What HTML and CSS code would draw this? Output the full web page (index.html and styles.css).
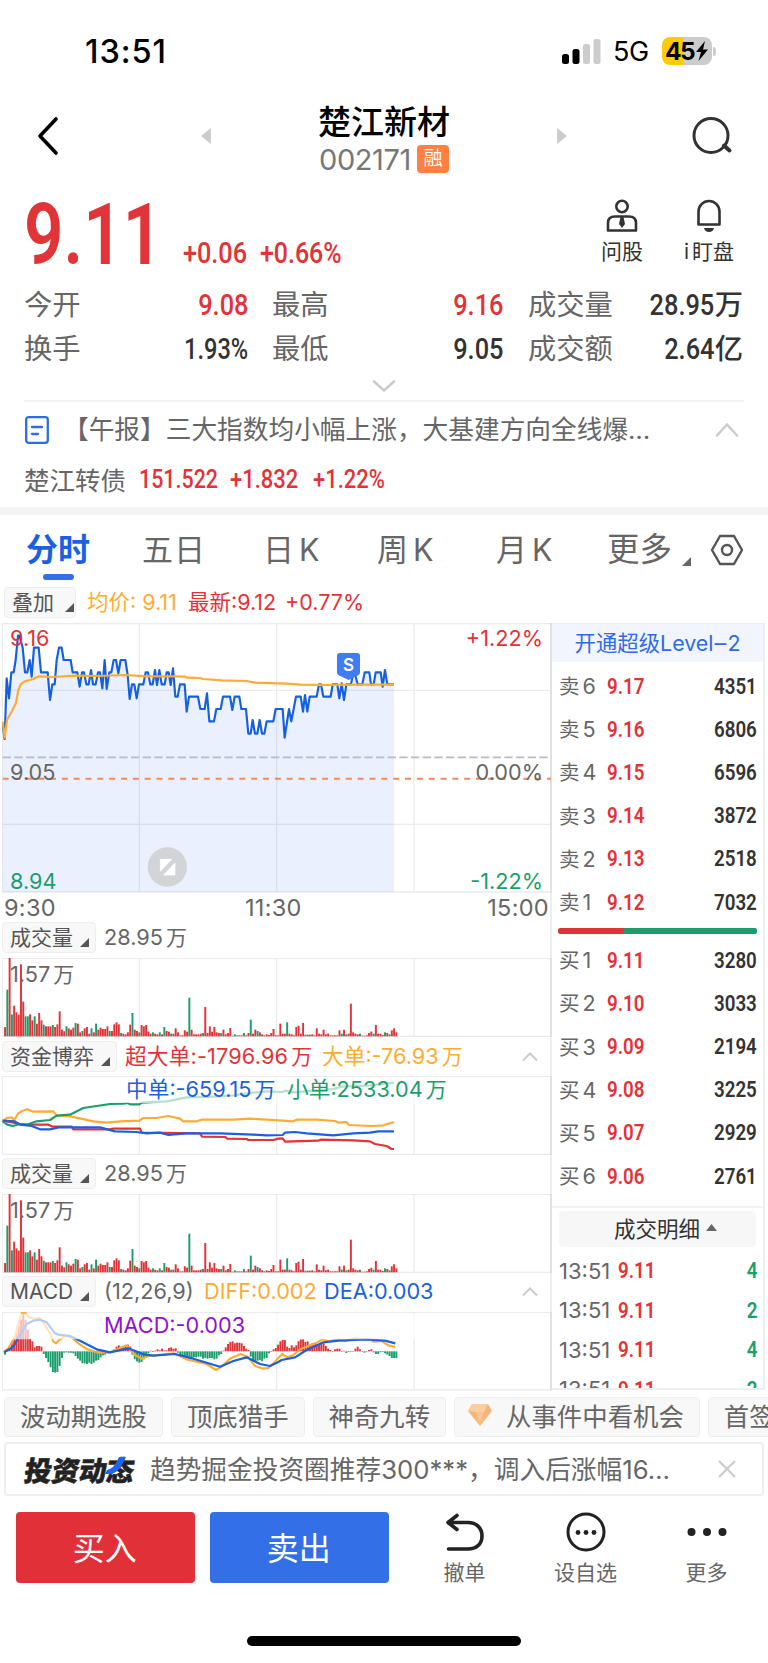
FILE: index.html
```html
<!DOCTYPE html>
<html lang="zh-CN">
<head>
<meta charset="utf-8">
<title>楚江新材 002171</title>
<link rel="stylesheet" href="styles.css">
</head>
<body>
<div class="screen">
  <header class="status">
    <span class="clock">13:51</span>
    <div class="status-right">
      <svg class="signal" width="39" height="25" viewBox="0 0 39 25"><rect x="0" y="15" width="7" height="10" rx="2.5"/><rect x="10.5" y="10" width="7" height="15" rx="2.5"/><rect x="21" y="5" width="7" height="20" rx="2.5" fill="#ccc"/><rect x="31.500" y="0" width="7" height="25" rx="2.5" fill="#ccc"/></svg>
      <span class="net">5G</span>
      <div class="battery"><span>45</span><svg width="14" height="20" viewBox="0 0 14 20"><path d="M10 0 1 11h5L3.500 20 13 8.500H8z"/></svg></div>
      <i class="nub"></i>
    </div>
  </header>

  <nav class="nav">
    <svg class="back" width="24" height="40" viewBox="0 0 24 40"><path d="M19 3 3 20l16 17" fill="none" stroke="#000" stroke-width="3.600" stroke-linecap="round" stroke-linejoin="round"/></svg>
    <svg class="prev" width="10" height="16"><path d="M10 0v16L0 8z" fill="#ccc"/></svg>
    <div class="title">
      <h1>楚江新材</h1>
      <div class="code"><span>002171</span><b>融</b></div>
    </div>
    <svg class="next" width="10" height="16"><path d="M0 0v16l10-8z" fill="#ccc"/></svg>
    <svg class="search" width="42" height="40" viewBox="0 0 42 40" fill="none" stroke="#333" stroke-linecap="round"><circle cx="20" cy="19.500" r="17" stroke-width="3"/><path d="m33 29.500 5.500 5" stroke-width="4"/></svg>
  </nav>

  <section class="quote">
    <span class="price din">9.11</span>
    <span class="chg din">+0.06</span>
    <span class="pct din">+0.66%</span>
    <div class="tool ask">
      <svg width="32" height="34" viewBox="0 0 32 34" fill="none" stroke="#333" stroke-width="2.600"><circle cx="16" cy="7.500" r="5.700"/><path d="M2 31.500V24q0-6.500 7-6.500h14q7 0 7 6.500v7.500z" stroke-linejoin="round"/><path d="M14.500 18h3l1.500 7-3 4-3-4z" fill="#333" stroke="none"/></svg>
      <span>问股</span>
    </div>
    <div class="tool watch">
      <svg width="28" height="34" viewBox="0 0 28 34" fill="none" stroke="#333" stroke-width="2.600"><path d="M3.500 25.500V12.500a10.500 10.500 0 0 1 21 0v13z" stroke-linejoin="round"/><path d="M9 29h10q-1 4-5 4t-5-4z" fill="#333" stroke="none"/></svg>
      <span><i>i</i>盯盘</span>
    </div>
  </section>

  <section class="stats">
    <label>今开</label><span class="v red"><b class="din">9.08</b></span>
    <label>最高</label><span class="v red"><b class="din">9.16</b></span>
    <label>成交量</label><span class="v"><b class="din">28.95</b>万</span>
    <label>换手</label><span class="v"><b class="din wide">1.93%</b></span>
    <label>最低</label><span class="v"><b class="din">9.05</b></span>
    <label>成交额</label><span class="v"><b class="din">2.64</b>亿</span>
  </section>
  <div class="expand"><svg width="24" height="12" fill="none" stroke="#ccc" stroke-width="2.600" stroke-linecap="round" stroke-linejoin="round"><path d="m2 1.500 10 9 10-9"/></svg></div>

  <section class="news">
    <svg width="24" height="28" viewBox="0 0 24 28" fill="none" stroke="#2f6be9" stroke-width="2.300" stroke-linecap="round"><rect x="1.200" y="1.200" width="21.600" height="25.600" rx="2.500"/><path d="M7 11h10M7 18h6"/></svg>
    <p>【午报】三大指数均小幅上涨，大基建方向全线爆…</p>
    <svg width="24" height="14" fill="none" stroke="#ccc" stroke-width="2.600" stroke-linecap="round" stroke-linejoin="round"><path d="m2 12.500 10-11 10 11"/></svg>
  </section>
  <section class="bond">
    <span class="name">楚江转债</span><b class="din b1">151.522</b><b class="din b2">+1.832</b><b class="din b3">+1.22%</b>
  </section>

  <nav class="tabs">
    <span class="on">分时</span><span class="day5">五日</span><span>日<i>K</i></span><span>周<i>K</i></span><span>月<i>K</i></span><span class="more">更多</span>
    <svg class="tri" width="9" height="9"><path d="M9 0v9H0z" fill="#666"/></svg>
    <svg class="hex" width="34" height="32" viewBox="0 0 34 32" fill="none" stroke="#555" stroke-width="2.400"><path d="M10 2h14l8 14-8 14H10L2 16z" stroke-linejoin="round"/><circle cx="17" cy="16" r="5"/></svg>
  </nav>

  <div class="legend">
    <span class="pill overlay">叠加<svg width="9" height="9"><path d="M9 0v9H0z" fill="#555"/></svg></span>
    <span class="amber l1">均价: 9.11</span><span class="red l2">最新:9.12</span><span class="red l3">+0.77%</span>
  </div>

  <main class="board">
    <div class="charts">
      <div class="plot main">
        <svg width="550" height="270" viewBox="6 24 1650 810" preserveAspectRatio="none">
          <path class="grid" d="M7 26H1655M7 226H1655M7 628H1655M7 831H1655M7 26V831M418 26V831M830 26V831M1242 26V831M1653 26V831"/>
          <path class="area" id="area"/>
          <path d="M8 427H1653" stroke="#b9bcc4" stroke-width="5" stroke-dasharray="25 10"/>
          <path d="M8 491H1653" stroke="#f5895a" stroke-width="6" stroke-dasharray="18 17.500"/>
          <path class="line" id="price" stroke="#1660e0"/>
          <path class="line" stroke="#fdac33" d="M8 320 14 368 21 315 35 290 48 264 55 225 63 207 75 199 100 192 115 184 160 186 220 182 290 183 375 180 440 184 520 184 555 185 562 188 600 189 608 192 665 196 740 198 765 203 860 206 900 209 970 210 1100 209 1182 209"/>
          <path d="M1019 114h53q8 0 8 8v50q0 6-5 9l-29 14-30-14q-5-3-5-9v-50q0-8 8-8z" fill="#3f7cf5"/>
          <circle cx="502" cy="756" r="59" fill="#d3d4d8"/>
          <path d="M481 733h34l-34 36zM525 744v36h-34z" fill="#fff" stroke="#fff" stroke-width="2" stroke-linejoin="round"/>
        </svg>
        <b class="mark">S</b>
        <span class="red tl">9.16</span><span class="red tr">+1.22%</span>
        <span class="ml">9.05</span><span class="mr">0.00%</span>
        <span class="green bl">8.94</span><span class="green br">-1.22%</span>
      </div>
      <div class="axis"><span>9:30</span><span>11:30</span><span>15:00</span></div>

      <div class="head first"><span class="pill">成交量<svg width="9" height="9"><path d="M9 0v9H0z" fill="#555"/></svg></span><span class="amount">28.95<i>万</i></span></div>
      <div class="plot sub"><svg class="vol" width="550" height="79" viewBox="6 113 1650 237"></svg><span class="max">1.57<i>万</i></span></div>

      <div class="head second"><span class="pill">资金博弈<svg width="9" height="9"><path d="M9 0v9H0z" fill="#555"/></svg></span><span class="red f1">超大单:-1796.96<i>万</i></span><span class="amber f2">大单:-76.93<i>万</i></span><svg class="fold" width="16" height="9" fill="none" stroke="#ccc" stroke-width="2"><path d="m1 8.500 7-7 7 7"/></svg></div>
      <div class="plot sub">
        <svg width="550" height="79" viewBox="6 466 1650 237">
          <path class="grid" d="M7 467H1655M7 701H1655M7 467V701M418 467V701M830 467V701M1242 467V701M1653 467V701"/>
          <path class="line" stroke="#e23338" d="M8 600 60 610 80 612 145 612 155 617 215 618 220 626 330 626 340 624 420 624 425 636 600 638 606 648 675 649 682 654 740 655 745 658 820 658 835 654 848 653 855 663 955 660 962 657 1060 659 1110 662 1125 670 1160 676 1175 685 1182 685"/>
          <path class="line" stroke="#fdac33" d="M8 602 20 592 35 590 42 598 55 578 68 570 82 566 100 573 160 572 170 584 215 588 280 602 320 606 360 602 418 600 430 592 470 592 505 586 540 594 550 602 590 602 605 597 700 597 750 594 848 600 880 602 890 597 950 597 1005 601 1015 606 1040 604 1046 613 1115 616 1150 614 1182 604"/>
          <path class="line" stroke="#1b9e6c" d="M8 602 22 612 38 616 60 610 80 612 110 602 150 598 170 585 210 582 250 562 290 556 330 550 370 549 384 547 390 551 418 551 425 546 500 542 560 530 640 528 700 524 760 516 800 512 848 514 855 510 880 515 940 510 1000 505 1025 498 1110 494 1182 486"/>
          <path class="line" stroke="#1b5fe3" d="M8 600 45 602 60 612 95 616 120 626 150 626 175 620 250 620 300 620 345 632 410 634 440 638 480 636 505 643 560 638 660 638 760 642 800 644 848 643 855 636 885 634 920 638 1000 644 1060 638 1110 636 1135 632 1182 632"/>
          <path d="M10 470H1650V547H10z" fill="#fff" fill-opacity=".68"/>
        </svg>
        <span class="blue g1">中单:-659.15<i>万</i></span><span class="green g2">小单:2533.04<i>万</i></span>
      </div>

      <div class="head"><span class="pill">成交量<svg width="9" height="9"><path d="M9 0v9H0z" fill="#555"/></svg></span><span class="amount">28.95<i>万</i></span></div>
      <div class="plot sub"><svg class="vol" width="550" height="79" viewBox="6 113 1650 237"></svg><span class="max">1.57<i>万</i></span></div>

      <div class="head"><span class="pill macd-pill">MACD<svg width="9" height="9"><path d="M9 0v9H0z" fill="#555"/></svg></span><span class="m1">(12,26,9)</span><span class="amber m2">DIFF:0.002</span><span class="blue m3">DEA:0.003</span><svg class="fold" width="16" height="9" fill="none" stroke="#ccc" stroke-width="2"><path d="m1 8.500 7-7 7 7"/></svg></div>
      <div class="plot sub">
        <svg width="550" height="79" viewBox="6 456 1650 237">
          <path class="grid" d="M7 457H1655M7 690H1655M7 457V690M418 457V690M830 457V690M1242 457V690M1653 457V690"/>
          <g id="macd"></g>
          <path class="line" stroke="#fdac33" d="M12 575 25 565 45 530 60 475 66 459 75 458 85 470 100 476 118 474 132 490 150 520 160 545 168 550 178 540 195 528 215 532 235 550 262 568 290 577 330 577 380 556 405 585 425 596 445 588 520 580 560 598 620 612 648 630 665 620 690 596 722 582 745 592 765 618 790 626 805 624 825 605 846 582 862 592 880 585 900 568 950 548 968 538 985 544 1015 538 1035 544 1065 534 1090 538 1110 538 1120 545 1145 543 1165 556 1186 561"/>
          <path class="line" stroke="#1b5fe3" d="M12 577 40 560 60 525 80 492 100 482 120 479 140 487 165 520 175 524 210 528 240 542 290 568 330 577 385 565 430 583 460 587 525 582 580 596 660 620 700 603 740 592 780 612 810 618 835 606 845 600 885 592 920 570 970 547 1015 542 1100 538 1155 542 1186 550"/>
          <path d="M10 461H1650V538H10z" fill="#fff" fill-opacity=".68"/>
        </svg>
        <span class="purple mv">MACD:-0.003</span>
      </div>
    </div>

    <aside class="book">
      <div class="level2">开通超级Level‒2</div>
      <ul class="depth sells">
        <li><span>卖<i>6</i></span><b class="din p">9.17</b><b class="din q">4351</b></li>
        <li><span>卖<i>5</i></span><b class="din p">9.16</b><b class="din q">6806</b></li>
        <li><span>卖<i>4</i></span><b class="din p">9.15</b><b class="din q">6596</b></li>
        <li><span>卖<i>3</i></span><b class="din p">9.14</b><b class="din q">3872</b></li>
        <li><span>卖<i>2</i></span><b class="din p">9.13</b><b class="din q">2518</b></li>
        <li><span>卖<i>1</i></span><b class="din p">9.12</b><b class="din q">7032</b></li>
      </ul>
      <div class="ratio"></div>
      <ul class="depth buys">
        <li><span>买<i>1</i></span><b class="din p">9.11</b><b class="din q">3280</b></li>
        <li><span>买<i>2</i></span><b class="din p">9.10</b><b class="din q">3033</b></li>
        <li><span>买<i>3</i></span><b class="din p">9.09</b><b class="din q">2194</b></li>
        <li><span>买<i>4</i></span><b class="din p">9.08</b><b class="din q">3225</b></li>
        <li><span>买<i>5</i></span><b class="din p">9.07</b><b class="din q">2929</b></li>
        <li><span>买<i>6</i></span><b class="din p">9.06</b><b class="din q">2761</b></li>
      </ul>
      <div class="detail"><div>成交明细<svg width="11" height="7"><path d="M0 7h11L5.500 0z" fill="#666"/></svg></div></div>
      <ul class="ticks">
        <li><span>13:51</span><b class="din p">9.11</b><b class="din q">4</b></li>
        <li><span>13:51</span><b class="din p">9.11</b><b class="din q">2</b></li>
        <li><span>13:51</span><b class="din p">9.11</b><b class="din q">4</b></li>
        <li><span>13:51</span><b class="din p">9.11</b><b class="din q">2</b></li>
      </ul>
    </aside>
  </main>

  <section class="chips">
    <span>波动期选股</span><span>顶底猎手</span><span>神奇九转</span>
    <span class="gem"><svg width="24" height="23" viewBox="0 0 24 23"><path d="M4 1h16l4 7-12 15L0 8z" fill="#f3b579"/><path d="M4 1h16l-4 8H8zM0 8l4-7 4 8z" fill="#f9cf9f"/><path d="M8 9h8l-4 14z" fill="#f7c48f"/></svg>从事件中看机会</span>
    <span>首签</span>
  </section>
  <section class="feed">
    <strong><em>投资动态</em><svg width="22" height="17" viewBox="0 0 22 17"><path d="M14 0h7l-3 6q-4 8-11 11H0l2-4q7-2 10-9z" fill="#2364ee"/></svg></strong>
    <p>趋势掘金投资圈推荐300***，调入后涨幅16…</p>
    <svg width="18" height="18" fill="none" stroke="#ccc" stroke-width="2.200"><path d="m1 1 16 16M17 1 1 17"/></svg>
  </section>
  <footer class="actions">
    <button class="buy">买入</button><button class="sell">卖出</button>
    <div class="act"><svg width="44" height="40" viewBox="0 0 44 40" fill="none" stroke="#222" stroke-width="3.600" stroke-linecap="round" stroke-linejoin="round"><path d="M14 3.500 5 10.500l9 7M6 10.500h19c8 0 14 5 14 13.500s-6 13-14 13H5.500"/></svg><span>撤单</span></div>
    <div class="act"><svg width="44" height="40" viewBox="0 0 44 40"><circle cx="22" cy="20" r="18" fill="none" stroke="#222" stroke-width="3"/><g fill="#222"><circle cx="14" cy="20.500" r="2.400"/><circle cx="22" cy="20.500" r="2.400"/><circle cx="30" cy="20.500" r="2.400"/></g></svg><span>设自选</span></div>
    <div class="act"><svg width="44" height="40" viewBox="0 0 44 40" fill="#222"><circle cx="6.500" cy="20" r="4"/><circle cx="22" cy="20" r="4"/><circle cx="37.500" cy="20" r="4"/></svg><span>更多</span></div>
  </footer>
  <div class="home"></div>
</div>
<script src="charts.js"></script>
</body>
</html>
```

FILE: styles.css
```css
* { box-sizing: border-box; margin: 0; padding: 0; }
body { width: 768px; height: 1663px; overflow: hidden; background: #fff; color: #666; font-family: Inter, "Noto Sans CJK SC", sans-serif; white-space: nowrap; }
i, em { font-style: normal; }
ul { list-style: none; }
svg { display: block; flex: none; }
.screen { display: flex; flex-direction: column; height: 1663px; overflow: hidden; }
.screen > * { flex: none; }
.din { display: inline-block; font-family: Roboto, sans-serif; font-weight: 500; }
.red { color: #e23338; }
.green { color: #1b9e6c; }
.amber { color: #fdac33; }
.blue { color: #1b5fe3; }
.purple { color: #9013cc; }

.status { display: flex; justify-content: space-between; align-items: center; height: 102px; padding: 0 52px 0 85px; color: #000; }
.clock { font-size: 32.500px; font-weight: 500; letter-spacing: .9px; }
.status-right { display: flex; align-items: center; }
.net { margin-left: 12px; width: 36px; font-size: 27px; font-weight: 400; letter-spacing: -.3px; }
.battery { display: flex; align-items: center; justify-content: center; gap: 1px; margin-left: 13px; width: 50px; height: 28px; border-radius: 8px; background: linear-gradient(90deg, #fecb09 44%, #ccc 44%); font-size: 24.500px; font-weight: 700; letter-spacing: -1.500px; }
.nub { width: 3px; height: 9px; margin-left: 1px; border-radius: 0 3px 3px 0; background: #ccc; }

.nav { display: grid; grid-template-columns: 37px 164px 10px 346px 10px 124px 42px; align-items: center; height: 82px; }
.back { grid-column: 2; margin-top: -14px; }
.prev { grid-column: 3; margin-top: -14px; }
.title { grid-column: 4; display: flex; flex-direction: column; align-items: center; margin-top: -7px; }
.title h1 { height: 39px; line-height: 39px; font-size: 33px; font-weight: 500; color: #000; }
.code { display: flex; align-items: center; gap: 6px; height: 34px; font-size: 29px; color: #777; }
.code span { letter-spacing: -.4px; }
.code b { width: 32px; height: 28px; border-radius: 4px; background: #ff8040; color: #fff; font-size: 19px; line-height: 27px; font-weight: 400; text-align: center; }
.next { grid-column: 5; margin-top: -14px; }
.search { grid-column: 7; margin-top: -14px; }

.quote { display: grid; grid-template-columns: 24px 159px 77px 318px 88px 86px; align-items: end; height: 93px; color: #e23338; }
.price { grid-column: 2; font-size: 86px; line-height: 86px; font-weight: 600; transform: scaleX(.805); transform-origin: left; margin-bottom: -1px; }
.chg, .pct { font-size: 29px; line-height: 34px; transform: scaleX(.87); transform-origin: left; margin-bottom: 7px; }
.pct { transform: scaleX(.86); }
.tool { display: flex; flex-direction: column; align-items: center; gap: 4px; color: #333; font-size: 21px; line-height: 29px; margin-bottom: 11px; }
.watch i { margin-right: 3px; }

.stats { display: grid; grid-template-columns: 54px 170px 80px 175px 110px 130px; grid-auto-rows: 43.500px; align-items: center; height: 88px; margin-left: 24px; padding-top: 7px; font-size: 28.300px; line-height: 43px; }
.stats label:nth-of-type(3n+2) { padding-left: 24px; }
.stats label:nth-of-type(3n) { padding-left: 25px; }
.v { display: flex; justify-content: flex-end; color: #333; font-weight: 500; }
.v.red { color: #e23338; }
.v .din { font-size: 29.500px; transform: scaleX(.86); transform-origin: right; }
.v .wide { transform: scaleX(.8); }
.expand { display: flex; justify-content: center; height: 37px; margin: 0 24px; padding-top: 15px; border-bottom: 2px solid #f1f1f1; }

.news { display: flex; align-items: center; height: 56px; padding: 0 29px 0 25px; font-size: 25.700px; }
.news p { flex: 1; margin: -6px 0 0 14px; }
.bond { display: flex; align-items: center; height: 49px; padding: 0 0 8px 24px; font-size: 25.500px; color: #e23338; }
.bond .name { width: 115px; color: #666; }
.bond .din { transform: scaleX(.86); transform-origin: left; }
.bond .b1 { width: 91px; transform: scaleX(.84); } .bond .b2 { width: 83px; }

.tabs { display: grid; grid-template-columns: 116px 121px 114px 119px 111px 75px 28px 40px; height: 78px; padding-left: 26px; border-top: 8px solid #f4f4f4; line-height: 70px; font-size: 31px; }
.tabs i { margin-left: 5px; font-size: 30.500px; }
.tabs .on { position: relative; color: #1b5fe3; font-size: 32px; font-weight: 600; }
.tabs .on::after { content: ""; position: absolute; left: 17px; bottom: 5px; width: 31px; height: 6px; border-radius: 3px; background: #356fe8; }
.day5 { letter-spacing: 1px; }
.more { font-size: 32.500px; }
.tri { margin-top: 42px; }
.hex { margin-top: 19px; }

.legend { display: flex; align-items: center; height: 38px; padding: 0 0 3px 4px; font-size: 21.500px; }
.pill { display: flex; align-items: center; justify-content: space-between; height: 31px; padding: 0 6px 0 7px; border: 1px solid #eee; border-radius: 4px; background: #f8f8f8; color: #555; font-size: 21px; line-height: 28px; }
.pill svg { margin: 9px 0 0 7px; }
.overlay { width: 72px; }
.overlay svg { margin-right: -5px; }
.legend > .amber, .legend > .red { margin-top: -2px; line-height: 30px; }
.l1 { margin-left: 11px; width: 101px; } .l2 { width: 97px; }

.board { display: grid; grid-template-columns: 550px 215px; height: 768px; }
.charts { padding-left: 2px; display: flex; flex-direction: column; }
.plot { position: relative; }
.plot span { position: absolute; font-size: 21.700px; line-height: 24px; }
.main { height: 270px; }
.grid { fill: none; stroke: #000; stroke-opacity: .08; stroke-width: 4; }
.area { fill: #3c78f0; fill-opacity: .11; }
.line { fill: none; stroke-width: 6.500; stroke-linejoin: round; }
.tl { left: 8px; top: 3px; } .tr { right: 7px; top: 3px; }
.ml { left: 8px; top: 137px; } .mr { right: 7px; top: 137px; }
.bl { left: 8px; top: 246px; } .br { right: 7px; top: 246px; }
.mark { position: absolute; left: 335px; top: 31px; width: 23px; color: #fff; font-size: 17px; line-height: 22px; font-weight: 600; text-align: center; }
.axis { display: grid; grid-template-columns: 241px 1fr auto; height: 29px; padding: 1px 1px 0 2px; font-size: 23.500px; line-height: 28px; letter-spacing: .3px; }
.head { display: flex; align-items: flex-end; height: 40px; padding: 0 12px 5px 0; font-size: 21.700px; line-height: 31px; }
.first { height: 36px; }
.second { height: 40px; padding-bottom: 4px; }
.head i, .plot span i { margin-left: 3px; font-size: 21px; }
.sub { height: 78px; }
.macd-pill { width: 94px; }
.amount { margin-left: 8px; }
.max { left: 8px; top: 4px; }
.f1 { margin-left: 8px; width: 197px; letter-spacing: .15px; }
.fold { margin: 0 0 11px auto; }
.g1 { left: 124px; top: 1px; } .g2 { left: 285px; top: 1px; }
.m1 { margin-left: 8px; width: 100px; } .m2 { width: 120px; }
.mv { left: 102px; top: 1px; }

.book { display: flex; flex-direction: column; height: 767px; overflow: hidden; border: 2px solid #eee; border-top-width: 1px; }
.book > * { flex: none; }
.level2 { height: 38px; background: #f2f5fd; color: #2f6be9; font-size: 21.400px; line-height: 38px; text-align: center; }
.sells { padding: 3px 6px 0 7px; }
.buys { padding: 5px 6px 0 7px; }
.depth li { display: flex; align-items: center; height: 43.200px; font-size: 20.500px; line-height: 30px; }
.depth li > span { width: 48px; }
.depth li i { margin-left: 3px; font-size: 21.500px; }
.book .din { font-size: 21.800px; font-weight: 600; transform: scaleX(.86); }
.book .p { color: #e23338; transform-origin: left; }
.book .q { margin-left: auto; color: #333; transform-origin: right; }
.ratio { height: 6px; margin: 4px 6px 0 6px; border-radius: 2px; background: linear-gradient(105deg, #e23338 33%, #1b9e6c 33.300%); }
.detail { margin-top: 8px; padding: 3px 7px; border-top: 2px solid #f2f2f2; }
.detail div { display: flex; align-items: center; justify-content: center; gap: 6px; height: 36px; padding-bottom: 3px; border-radius: 4px; background: #f7f7f7; color: #333; font-size: 21.500px; }
.detail svg { margin-right: -16px; }
.ticks { padding: 1px 6px 0 7px; }
.ticks li { display: flex; align-items: center; height: 39.400px; font-size: 22px; }
.ticks li > span { width: 59px; }
.ticks .q { color: #1b9e6c; }

.chips { display: flex; gap: 8px; height: 46px; padding: 6px 0 0 4px; overflow: hidden; }
.chips span { display: flex; align-items: center; flex: none; height: 40px; padding: 0 15px; border: 1px solid #eee; border-radius: 4px; background: #f8f8f8; font-size: 25.400px; line-height: 36px; }
.gem svg { margin: 0 14px 6px -2px; }
.feed { display: flex; align-items: center; height: 54px; margin: 5px 4px 0; padding: 0 26px 0 19px; border: 2px solid #eee; border-radius: 4px; font-size: 25.700px; }
.feed strong { position: relative; width: 125px; color: #222; font-size: 27.500px; font-weight: 900; letter-spacing: -.2px; }
.feed strong em { display: inline-block; transform: skewX(-9deg); -webkit-text-stroke: .5px #222; }
.feed strong svg { position: absolute; left: 80px; top: 8px; }
.feed p { flex: 1; margin-top: -3px; }
.actions { display: flex; height: 140px; padding: 16px 0 0 16px; }
button { width: 178.500px; height: 71px; margin-right: 15.500px; padding: 0 1px 3px 0; border: 0; border-radius: 4px; color: #fff; font: 32px "Noto Sans CJK SC", sans-serif; }
.buy { background: #e13037; }
.sell { background: #336fe7; }
.act { display: flex; flex-direction: column; align-items: center; width: 121px; font-size: 21px; line-height: 30px; gap: 6px; }
.home { width: 274px; height: 10px; margin: 0 auto; border-radius: 5px; background: #000; }
```

FILE: charts.js
```js
const NS = "http://www.w3.org/2000/svg";
const PITCH = 6.825;
const RED = "#e23338", GREEN = "#1b9e6c";

const price = "8 330 14 372 20 190 27 250 34 172 41 172 47 135 54 62 59 62 68 98 75 172 82 172 89 135 95 185 102 98 116 98 123 172 143 172 150 255 157 208 164 208 170 135 177 98 185 98 191 135 212 135 218 172 232 172 239 215 246 172 252 172 259 208 266 208 273 165 279 208 287 208 294 172 300 172 307 220 314 135 320 222 328 172 334 172 341 135 348 135 355 175 362 135 376 135 383 180 389 252 396 208 403 208 410 250 417 208 430 208 437 172 444 172 451 208 458 208 465 165 471 210 478 165 485 208 494 208 500 172 506 172 512 210 519 160 526 245 533 245 540 208 554 208 560 290 567 245 594 245 601 282 614 282 621 235 628 319 642 319 649 282 662 282 669 245 690 245 697 285 704 245 718 245 724 282 738 282 745 356 752 356 758 315 765 356 772 356 779 315 786 356 793 356 800 319 820 319 827 282 848 282 854 368 867 282 874 319 888 245 902 245 909 290 915 240 922 290 929 245 950 245 957 208 963 208 970 245 992 245 998 208 1012 208 1018 250 1025 205 1032 255 1039 208 1053 208 1060 172 1067 185 1073 208 1087 208 1094 172 1108 172 1113 208 1121 208 1127 172 1142 172 1148 215 1155 165 1162 208 1182 208";
document.getElementById("price").setAttribute("d", "M" + price);
document.getElementById("area").setAttribute("d", "M" + price + " 1182 831 8 831Z");

// Bar heights per minute; a trailing g marks a falling minute.
const volume = "28 140g 235 66g 92 72 65 216 104 60g 60g 66 48 60g 38 70 48 35g 30 30 30 34g 28 36 75 20 15 30g 24 20 26 40g 38 12 16g 24 28 8 24g 12 38g 20 26 22 22 30 16g 16 36 42 36 10g 8 6 12 35 70g 20 16 12g 34 30 34 14 8 12g 8 6 12g 6 28g 16 14 8g 8 24 12 3 3 18 14 116g 20 6 6 6 8 10g 88 10 30 14 28 12 10 10g 20 6 10 25 2 6g 3g 3 3 10g 3 10 50g 8 20 16g 12 6 3 6 4 10 22 3 3 38 8 8 42g 8 6 3 28 32 8 40 5g 5 5g 6 3 24 8 6 20 6 8 3 3 3 3 18 8g 20 6g 8 98 12 8 6 8g 2 2 3 10 14 8g 34 8 8 4 12g 10 6g 18 24 12".split(" ");
const macd = [-10,0,10,25,40,55,75,95,112,95,65,38,30,12,16,16,14,-8,-20,-32,-48,-62,-64,-62,-44,-20,-4,-3,-4,-4,-6,-14,-22,-28,-36,-36,-38,-34,-38,-34,-28,-26,-18,-12,-10,-6,-4,-2,6,14,18,14,16,16,20,14,-10,-24,-30,-34,-32,-24,-18,-6,2,-2,2,6,3,8,3,3,10,12,8,9,-4,-14,-14,-16,-20,-24,-22,-18,-18,-16,-16,-22,-20,-22,-20,-20,-24,-22,-12,-8,2,12,22,28,30,24,26,26,24,16,8,4,-16,-26,-30,-28,-26,-30,-22,-20,-6,0,6,10,20,30,34,34,14,10,18,12,18,30,36,36,28,30,20,24,22,20,22,24,24,16,8,4,0,6,8,8,0,2,-5,-2,0,0,8,14,6,0,-4,0,4,6,-3,-8,-8,-3,-2,-6,-10,-14,-20,-20,-20];

function bar(parent, i, y, h, fill) {
  const r = document.createElementNS(NS, "rect");
  r.setAttribute("x", 12.3 + i * PITCH);
  r.setAttribute("y", y);
  r.setAttribute("width", 5.8);
  r.setAttribute("height", h);
  r.setAttribute("fill", fill);
  parent.append(r);
}

for (const svg of document.querySelectorAll(".vol")) {
  const grid = document.createElementNS(NS, "path");
  grid.setAttribute("class", "grid");
  grid.setAttribute("d", "M7 114H1655M7 348H1655M7 114V348M418 114V348M830 114V348M1242 114V348M1653 114V348");
  svg.append(grid);
  volume.forEach((v, i) => {
    const h = parseInt(v, 10);
    bar(svg, i, 348 - h, h, v.endsWith("g") ? GREEN : RED);
  });
}
const hist = document.getElementById("macd");
macd.forEach((v, i) => bar(hist, i, v > 0 ? 574 - v : 574, Math.max(Math.abs(v), 1.5), v < 0 ? GREEN : RED));
```
